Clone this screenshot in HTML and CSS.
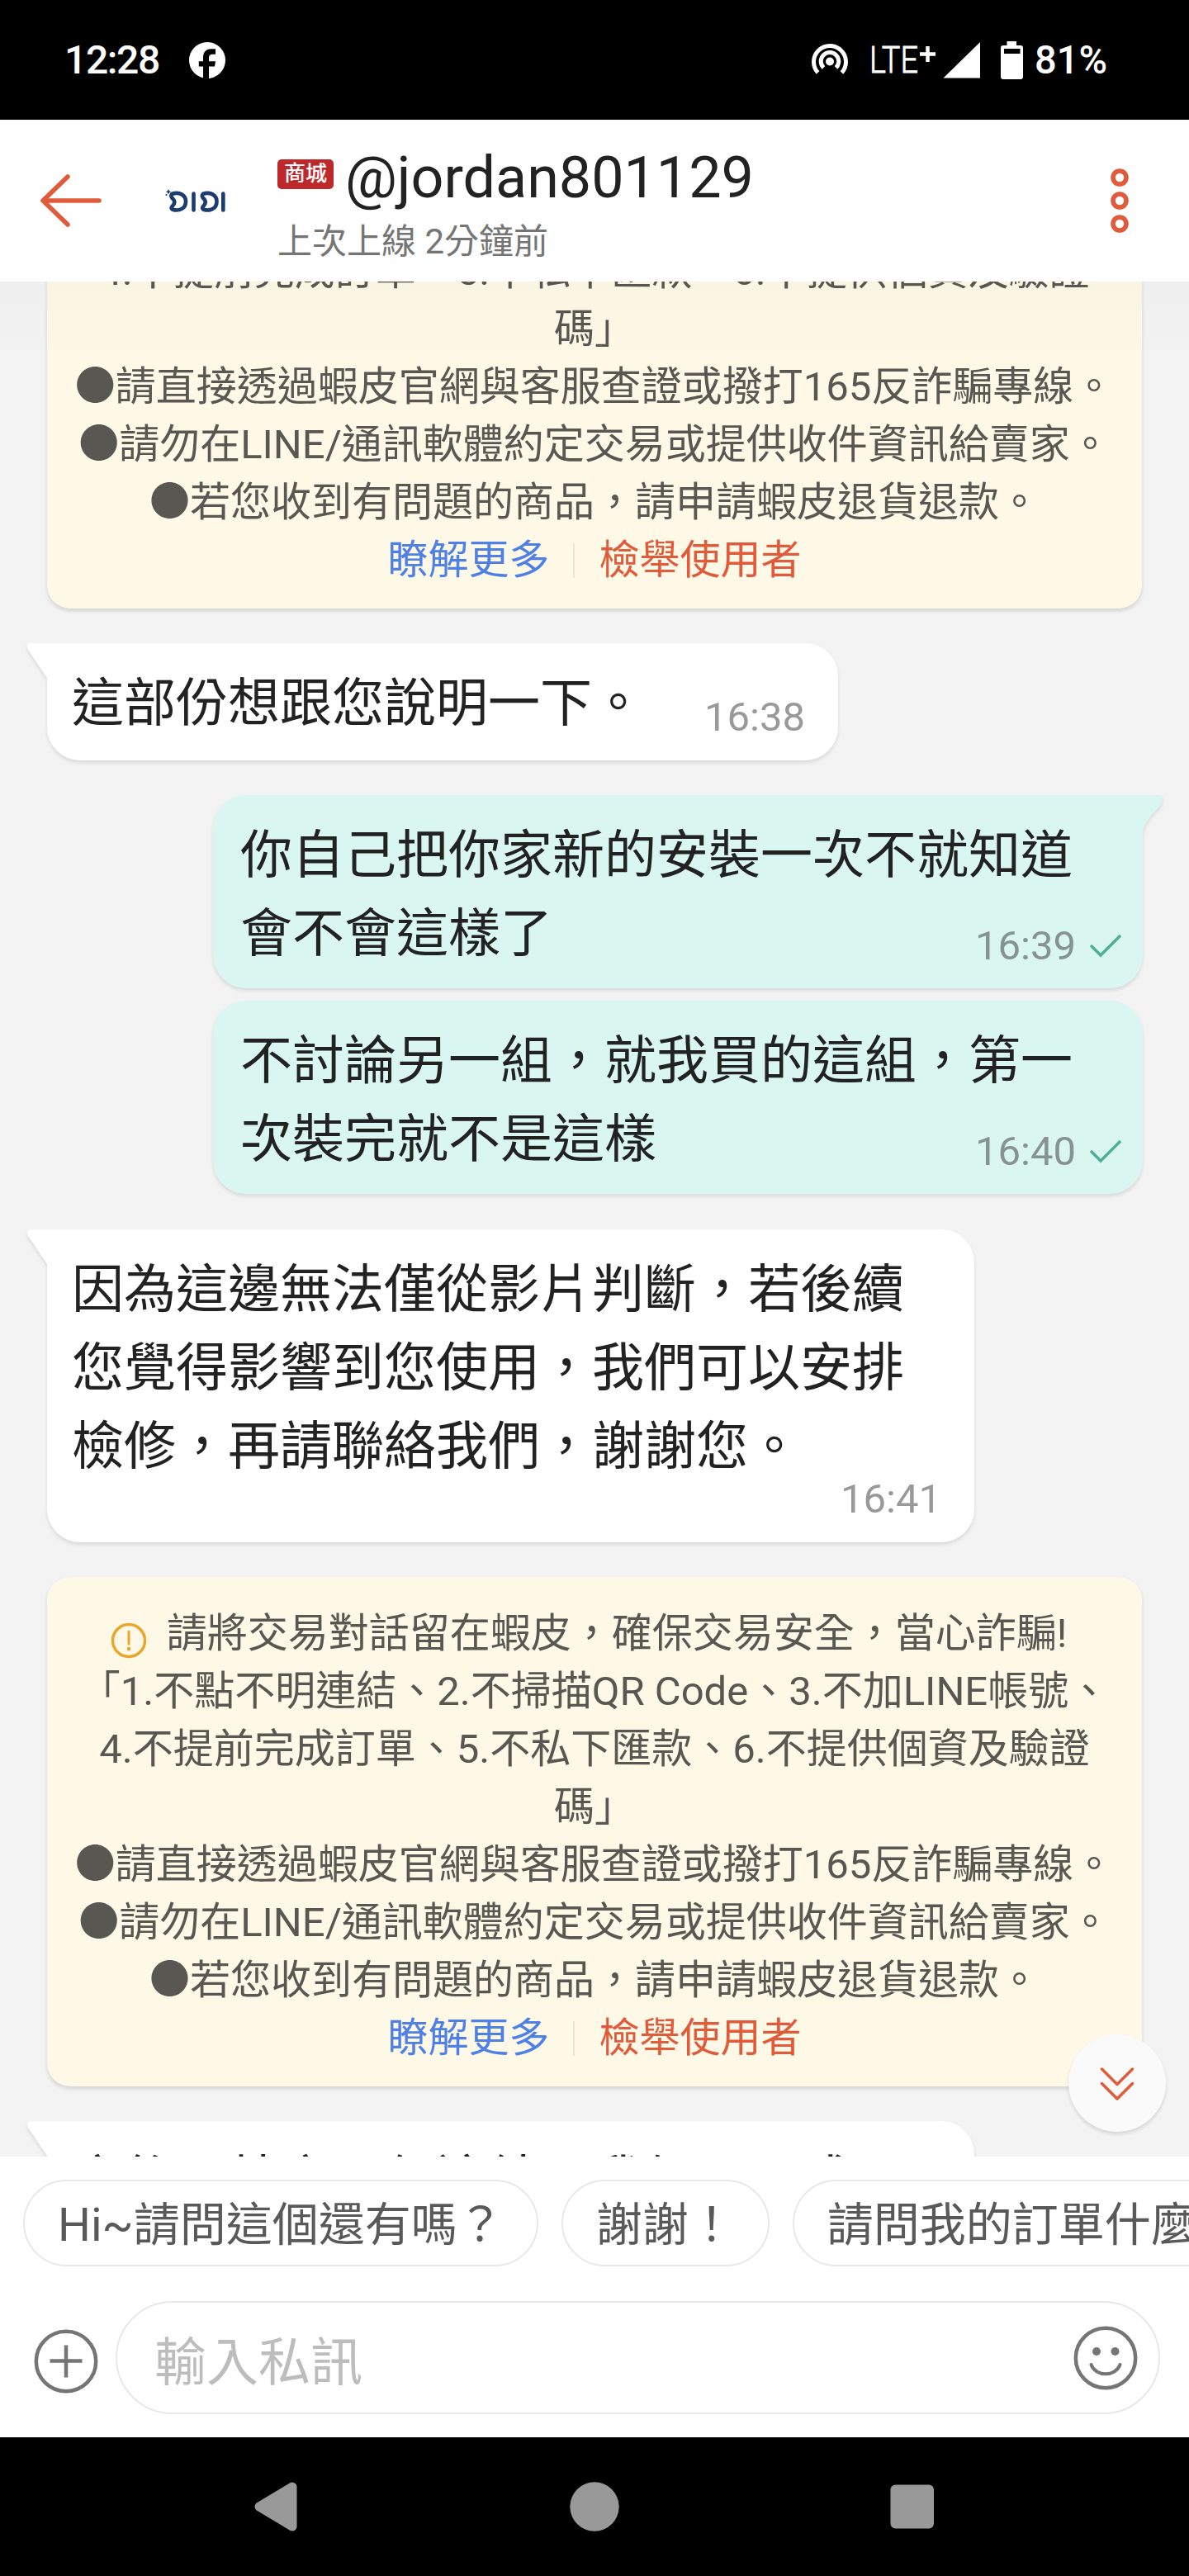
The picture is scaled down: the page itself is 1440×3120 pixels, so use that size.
FILE: index.html
```html
<!DOCTYPE html>
<html lang="zh-Hant">
<head>
<meta charset="utf-8">
<title>@jordan801129</title>
<link rel="stylesheet" href="styles.css">
</head>
<body>
<div class="status">
  <span class="clock">12:28</span>
  <svg class="fb" width="44" height="44" viewBox="0 0 44 44"><circle cx="22" cy="22" r="22" fill="#fff"/><path d="M17 46V29.5h-5.2v-6.3H17v-4.4c0-6 3.200-10.500 9.500-10.500h5.500v6.500h-4c-2.600 0-4 1.500-4 4.200v4.200h8l-1 6.300h-7V46z" fill="#000"/></svg>
  <svg class="sysicons" width="360" height="60" viewBox="980 40 360 60">
    <g fill="none" stroke="#fff" stroke-width="5">
      <path d="M990.500 88A19.500 19.500 0 1 1 1019.500 88"/>
      <path d="M997.500 82A10.800 10.800 0 1 1 1012.500 82"/>
    </g>
    <circle cx="1005" cy="74.500" r="5" fill="#fff"/>
    <text class="lte" x="1053" y="88" textLength="59" lengthAdjust="spacingAndGlyphs">LTE</text>
    <path d="M1123.500 56v19M1114 65.500h19" stroke="#fff" stroke-width="4.500"/>
    <path d="M1187 51v43.500h-44.500z" fill="#fff"/>
    <path d="M1219.500 50h11.500v5h5q3 0 3 3v35q0 3-3 3h-21q-3 0-3-3V58q0-3 3-3h4.500z" fill="#fff"/>
    <path d="M1216 59h19.500v6H1216z" fill="#000"/>
    <text class="pct" x="1253" y="89" textLength="88" lengthAdjust="spacingAndGlyphs">81%</text>
  </svg>
</div>

<header class="header">
  <svg class="back" width="76" height="68" viewBox="0 0 76 68"><path d="M34 5L4 34l30 29M4 34h68" fill="none" stroke="#e05b3b" stroke-width="5.500" stroke-linecap="round" stroke-linejoin="round"/></svg>
  <svg class="logo" width="100" height="60" viewBox="0 0 100 60" role="img" aria-label="DIDI">
    <g fill="none" stroke="#1b3c6e" stroke-width="4.600" stroke-linecap="round" stroke-linejoin="round">
      <path id="bean" d="M18.500 19.800C27 17 35 21 35 29.200C35 37.500 27 41.500 18.500 38.500Q16.500 37 19 34.500Q23 30 20 26.500Q15.500 22.500 18.500 19.800z"/>
      <path d="M44.500 19.500v20M80.300 19.500v20"/>
      <path d="M56 19.800C64.500 17 72.500 21 72.500 29.200C72.500 37.500 64.500 41.500 56 38.500Q54 37 56.500 34.500Q60.500 30 57.500 26.500Q53 22.500 56 19.800z"/>
    </g>
    <path d="M14 14l1 2.200l2.200 1l-2.200 1l-1 2.200l-1-2.200l-2.200-1l2.200-1z" fill="#1b3c6e"/><circle cx="11.500" cy="21" r="1.100" fill="#1b3c6e"/>
  </svg>
  <div class="who">
    <div class="name"><span class="mall">商城</span><span class="handle">@jordan801129</span></div>
    <div class="seen">上次上線 2分鐘前</div>
  </div>
  <svg class="more" width="24" height="80" viewBox="0 0 24 80"><g fill="none" stroke="#e05b3b" stroke-width="5.600"><circle cx="12" cy="12" r="8"/><circle cx="12" cy="40" r="8"/><circle cx="12" cy="68" r="8"/></g></svg>
</header>

<main class="chat">
  <div class="thread">
    <section class="notice scrolled">
      <p>4.不提前完成訂單、5.不私下匯款、6.不提供個資及驗證</p>
      <p>碼」</p>
      <p>●請直接透過蝦皮官網與客服查證或撥打165反詐騙專線。</p>
      <p>●請勿在LINE/通訊軟體約定交易或提供收件資訊給賣家。</p>
      <p>●若您收到有問題的商品，請申請蝦皮退貨退款。</p>
      <p class="links"><a class="learn">瞭解更多</a><i class="bar"></i><a class="report">檢舉使用者</a></p>
    </section>

    <div class="bubble them m1">
      <svg class="tail" width="40" height="44" viewBox="0 0 40 44"><path d="M40 0H4Q0 0 0 4Q0 8 3 11L24 42H40z" fill="#fff"/></svg>
      <p>這部份想跟您說明一下。</p><span class="time">16:38</span>
    </div>

    <div class="bubble me m2">
      <svg class="tail" width="64" height="44" viewBox="0 0 64 44"><path d="M0 0H60Q64 0 64 4Q64 8 61 13Q44 30 40.500 42H0z" fill="#d9f6f0"/></svg>
      <p>你自己把你家新的安裝一次不就知道<br>會不會這樣了</p>
      <span class="time">16:39<svg class="tick" width="40" height="30" viewBox="0 0 40 30"><path d="M2 14L14 26L38 2" fill="none" stroke="#4fae98" stroke-width="3.500"/></svg></span>
    </div>

    <div class="bubble me m3">
      <p>不討論另一組，就我買的這組，第一<br>次裝完就不是這樣</p>
      <span class="time">16:40<svg class="tick" width="40" height="30" viewBox="0 0 40 30"><path d="M2 14L14 26L38 2" fill="none" stroke="#4fae98" stroke-width="3.500"/></svg></span>
    </div>

    <div class="bubble them m4">
      <svg class="tail" width="40" height="44" viewBox="0 0 40 44"><path d="M40 0H4Q0 0 0 4Q0 8 3 11L24 42H40z" fill="#fff"/></svg>
      <p>因為這邊無法僅從影片判斷，若後續<br>您覺得影響到您使用，我們可以安排<br>檢修，再請聯絡我們，謝謝您。</p>
      <span class="time">16:41</span>
    </div>

    <section class="notice">
      <p class="lead"><svg class="warn" width="44" height="44" viewBox="0 0 44 44"><circle cx="22" cy="22" r="19.500" fill="none" stroke="#e8a62b" stroke-width="3.500"/><path d="M22 11v15" stroke="#e8a62b" stroke-width="3" stroke-linecap="round"/><circle cx="22" cy="32" r="2.300" fill="#e8a62b"/></svg>請將交易對話留在蝦皮，確保交易安全，當心詐騙!</p>
      <p>「1.不點不明連結、2.不掃描QR Code、3.不加LINE帳號、</p>
      <p>4.不提前完成訂單、5.不私下匯款、6.不提供個資及驗證</p>
      <p>碼」</p>
      <p>●請直接透過蝦皮官網與客服查證或撥打165反詐騙專線。</p>
      <p>●請勿在LINE/通訊軟體約定交易或提供收件資訊給賣家。</p>
      <p>●若您收到有問題的商品，請申請蝦皮退貨退款。</p>
      <p class="links"><a class="learn">瞭解更多</a><i class="bar"></i><a class="report">檢舉使用者</a></p>
    </section>

    <div class="bubble them m5">
      <svg class="tail" width="40" height="44" viewBox="0 0 40 44"><path d="M40 0H4Q0 0 0 4Q0 8 3 11L24 42H40z" fill="#fff"/></svg>
      <p>方後，特方，但這結，我們，可成</p>
    </div>
  </div>
  <div class="fab"><svg width="44" height="44" viewBox="0 0 44 44"><path d="M3.500 5L22 23.500L40.500 5M3.500 22.500L22 41L40.500 22.500" fill="none" stroke="#e05b3b" stroke-width="3.500" stroke-linecap="round" stroke-linejoin="round"/></svg></div>
</main>

<footer class="composer">
  <div class="chips">
    <span class="chip">Hi~請問這個還有嗎？</span>
    <span class="chip">謝謝！</span>
    <span class="chip">請問我的訂單什麼時候出貨？</span>
  </div>
  <div class="entry">
    <svg class="plus" width="78" height="78" viewBox="0 0 78 78"><g fill="none" stroke="#757575" stroke-width="4.500"><circle cx="39" cy="39" r="36.200"/><path d="M39 19.500v39M19.500 38.500h39"/></g></svg>
    <div class="field"><span>輸入私訊</span>
      <svg class="smile" width="78" height="78" viewBox="0 0 78 78"><g fill="none" stroke="#757575" stroke-width="4.500"><circle cx="39" cy="39" r="36.200"/><path d="M21.500 47C27 62 51 62 56.500 47" stroke-linecap="round" stroke-width="4"/></g><g fill="#757575"><circle cx="28" cy="31" r="5"/><circle cx="50.500" cy="31" r="5"/></g></svg>
    </div>
  </div>
</footer>

<nav class="nav">
  <svg width="54" height="60" viewBox="0 0 54 60"><path d="M47 6V54L7 30z" fill="#999" stroke="#999" stroke-width="11" stroke-linejoin="round"/></svg>
  <svg width="60" height="60" viewBox="0 0 60 60"><circle cx="30" cy="30" r="29.700" fill="#999"/></svg>
  <svg width="54" height="54" viewBox="0 0 54 54"><rect x=".5" y=".5" width="52.500" height="53" rx="6" fill="#999"/></svg>
</nav>
</body>
</html>
```
FILE: styles.css
```css
* { box-sizing: border-box; }
body {
  margin: 0;
  width: 1440px;
  height: 3120px;
  overflow: hidden;
  display: flex;
  flex-direction: column;
  background: #fff;
  font-family: Roboto, "Noto Sans CJK TC", sans-serif;
  text-spacing-trim: space-all;
  white-space: nowrap;
}
svg { display: block; flex: none; }
p { margin: 0; }

.status {
  height: 145px;
  flex: none;
  background: #000;
  color: #fff;
  display: flex;
  align-items: center;
  padding: 0 100px 0 78px;
}
.clock { width: 151px; font-size: 48px; font-weight: 500; letter-spacing: -1.4px; }
.sysicons { margin-left: auto; margin-top: -5px; overflow: visible; }
.lte { font: 300 44px Roboto, sans-serif; fill: #fff; stroke: #fff; stroke-width: .8; }
.pct { font: 500 48px Roboto, sans-serif; fill: #fff; }

.header {
  height: 196px;
  flex: none;
  background: #fff;
  display: flex;
  align-items: center;
}
.back { margin-left: 48px; }
.logo { margin: 4px 0 0 66px; }
.who { margin-left: 46px; align-self: flex-start; padding-top: 24px; }
.name { display: flex; align-items: center; height: 92px; color: #222; }
.mall {
  width: 68px;
  height: 36px;
  line-height: 35px;
  border-radius: 5px;
  background: #bf282b;
  color: #fff;
  font-size: 26px;
  font-weight: 500;
  text-align: center;
  margin-right: 14px;
  margin-top: -8px;
}
.handle { font-size: 70px; line-height: 92px; margin-top: -1px; }
.seen { font-size: 42px; line-height: 60px; margin-top: 2px; color: #757575; }
.more { margin-left: auto; margin-right: 72px; }

.chat {
  height: 2271px;
  flex: none;
  position: relative;
  overflow: hidden;
  background: #f3f3f3;
  display: flex;
  flex-direction: column;
}
.chat::after {
  content: "";
  position: absolute;
  inset: 0 0 auto;
  height: 84px;
  background: linear-gradient(rgba(0, 0, 0, .016), rgba(0, 0, 0, .004));
}
.thread {
  margin-top: -81px;
  padding: 0 57px;
  display: flex;
  flex-direction: column;
  align-items: flex-start;
}
.notice {
  width: 1326px;
  height: 617px;
  flex: none;
  padding-top: 34px;
  border-radius: 28px;
  background: #fef8e6;
  box-shadow: 0 3px 5px rgba(0, 0, 0, .13);
  color: #595751;
  font-size: 49px;
  line-height: 70px;
}
.notice.scrolled { height: 477px; }
.notice p { display: flex; align-items: center; justify-content: center; height: 70px; white-space: pre; }
.notice .lead { padding-right: 14px; }
.warn { margin: 15px 24px 0 0; }
.learn { color: #4f80e6; }
.report { color: #e05b3b; }
.bar { width: 2px; height: 42px; margin: 0 30px 0 28px; background: #ece6d6; }

.bubble {
  position: relative;
  flex: none;
  border-radius: 40px;
  filter: drop-shadow(0 3px 2px rgba(0, 0, 0, .1));
  color: #222;
  font-size: 63px;
  line-height: 95px;
  padding: 25px 30px 0;
}
.them { background: #fff; border-top-left-radius: 0; }
.me { align-self: flex-end; width: 1126px; height: 234px; margin-right: -1px; background: #d9f6f0; padding-left: 33px; }
.tail { position: absolute; top: 0; left: -24px; }
.me .tail { left: auto; right: -24px; }
.time {
  position: absolute;
  right: 40px;
  bottom: 27px;
  display: flex;
  align-items: center;
  font-size: 49px;
  line-height: 50px;
  color: #999;
}
.me .time { right: 25px; bottom: 26px; color: #869390; }
.tick { margin-left: 16px; }
.m1 { width: 958px; height: 142px; margin-top: 42px; }
.m2 { margin-top: 42px; border-top-right-radius: 0; }
.m3 { margin-top: 15px; }
.m4 { width: 1123px; height: 379px; margin: 43px 0 42px; }
.m5 { width: 1123px; height: 234px; margin-top: 42px; padding-top: 24px; }

.fab {
  position: absolute;
  left: 1294px;
  top: 2123px;
  width: 118px;
  height: 118px;
  border-radius: 50%;
  background: #fafafa;
  box-shadow: 0 3px 4px rgba(0, 0, 0, .12);
  display: flex;
  align-items: center;
  justify-content: center;
}

.composer { height: 340px; flex: none; background: #fff; overflow: hidden; }
.chips { display: flex; gap: 28px; padding: 28px 0 0 28px; }
.chip {
  flex: none;
  height: 105px;
  padding: 3px 40px 0;
  border: 2px solid #e8e8e8;
  border-radius: 53px;
  color: #595959;
  font-size: 56px;
  line-height: 101px;
}
.entry { display: flex; align-items: center; padding: 42px 35px 0 41px; gap: 21px; }
.plus { margin-top: 8px; }
.field {
  flex: 1;
  height: 137px;
  border: 2px solid #e8e8e8;
  border-radius: 69px;
  display: flex;
  align-items: center;
  justify-content: space-between;
  padding: 0 25px 0 45px;
  color: #bdbdbd;
  font-size: 63px;
}

.nav {
  flex: 1;
  background: #000;
  display: flex;
  align-items: center;
  justify-content: space-between;
  padding: 0 308px 0 307px;
}
```
